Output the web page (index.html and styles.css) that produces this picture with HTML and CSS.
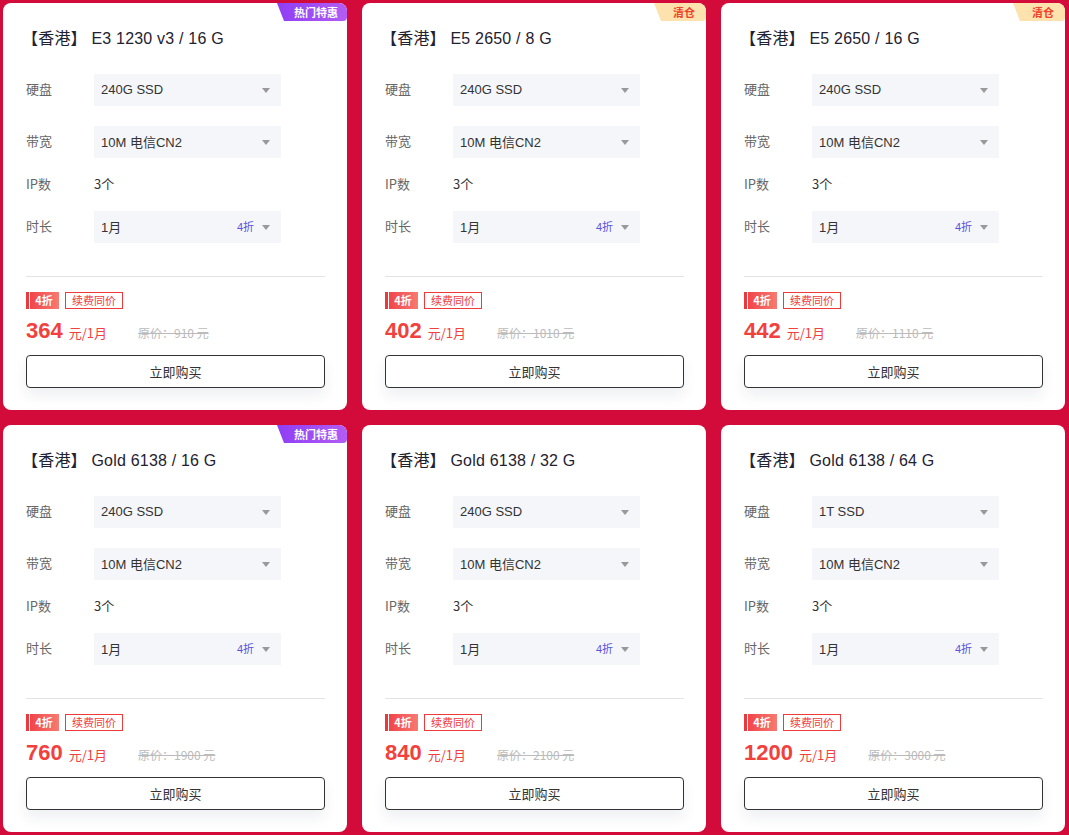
FILE: index.html
```html
<!DOCTYPE html>
<html lang="zh-CN">
<head>
<meta charset="utf-8">
<link rel="stylesheet" href="styles.css">
</head>
<body>
<div class="grid">

  <div class="card">
    <div class="badge badge-hot">热门特惠</div>
    <div class="title">【香港】 E3 1230 v3 / 16 G</div>
    <div class="form">
      <div class="row"><span class="label">硬盘</span><div class="select"><span>240G SSD</span><i class="arrow"></i></div></div>
      <div class="row"><span class="label">带宽</span><div class="select"><span>10M 电信CN2</span><i class="arrow"></i></div></div>
      <div class="row row-plain"><span class="label">IP数</span><span class="value">3个</span></div>
      <div class="row"><span class="label">时长</span><div class="select"><span>1月</span><span class="off">4折</span><i class="arrow"></i></div></div>
    </div>
    <div class="divider"></div>
    <div class="tags"><span class="tag-off">4折</span><span class="tag-renew">续费同价</span></div>
    <div class="price"><span class="num">364</span><span class="unit">元/1月</span><span class="orig">原价：910 元</span></div>
    <button class="buy">立即购买</button>
  </div>

  <div class="card">
    <div class="badge badge-clear">清仓</div>
    <div class="title">【香港】 E5 2650 / 8 G</div>
    <div class="form">
      <div class="row"><span class="label">硬盘</span><div class="select"><span>240G SSD</span><i class="arrow"></i></div></div>
      <div class="row"><span class="label">带宽</span><div class="select"><span>10M 电信CN2</span><i class="arrow"></i></div></div>
      <div class="row row-plain"><span class="label">IP数</span><span class="value">3个</span></div>
      <div class="row"><span class="label">时长</span><div class="select"><span>1月</span><span class="off">4折</span><i class="arrow"></i></div></div>
    </div>
    <div class="divider"></div>
    <div class="tags"><span class="tag-off">4折</span><span class="tag-renew">续费同价</span></div>
    <div class="price"><span class="num">402</span><span class="unit">元/1月</span><span class="orig">原价：1010 元</span></div>
    <button class="buy">立即购买</button>
  </div>

  <div class="card">
    <div class="badge badge-clear">清仓</div>
    <div class="title">【香港】 E5 2650 / 16 G</div>
    <div class="form">
      <div class="row"><span class="label">硬盘</span><div class="select"><span>240G SSD</span><i class="arrow"></i></div></div>
      <div class="row"><span class="label">带宽</span><div class="select"><span>10M 电信CN2</span><i class="arrow"></i></div></div>
      <div class="row row-plain"><span class="label">IP数</span><span class="value">3个</span></div>
      <div class="row"><span class="label">时长</span><div class="select"><span>1月</span><span class="off">4折</span><i class="arrow"></i></div></div>
    </div>
    <div class="divider"></div>
    <div class="tags"><span class="tag-off">4折</span><span class="tag-renew">续费同价</span></div>
    <div class="price"><span class="num">442</span><span class="unit">元/1月</span><span class="orig">原价：1110 元</span></div>
    <button class="buy">立即购买</button>
  </div>

  <div class="card">
    <div class="badge badge-hot">热门特惠</div>
    <div class="title">【香港】 Gold 6138 / 16 G</div>
    <div class="form">
      <div class="row"><span class="label">硬盘</span><div class="select"><span>240G SSD</span><i class="arrow"></i></div></div>
      <div class="row"><span class="label">带宽</span><div class="select"><span>10M 电信CN2</span><i class="arrow"></i></div></div>
      <div class="row row-plain"><span class="label">IP数</span><span class="value">3个</span></div>
      <div class="row"><span class="label">时长</span><div class="select"><span>1月</span><span class="off">4折</span><i class="arrow"></i></div></div>
    </div>
    <div class="divider"></div>
    <div class="tags"><span class="tag-off">4折</span><span class="tag-renew">续费同价</span></div>
    <div class="price"><span class="num">760</span><span class="unit">元/1月</span><span class="orig">原价：1900 元</span></div>
    <button class="buy">立即购买</button>
  </div>

  <div class="card">
    <div class="title">【香港】 Gold 6138 / 32 G</div>
    <div class="form">
      <div class="row"><span class="label">硬盘</span><div class="select"><span>240G SSD</span><i class="arrow"></i></div></div>
      <div class="row"><span class="label">带宽</span><div class="select"><span>10M 电信CN2</span><i class="arrow"></i></div></div>
      <div class="row row-plain"><span class="label">IP数</span><span class="value">3个</span></div>
      <div class="row"><span class="label">时长</span><div class="select"><span>1月</span><span class="off">4折</span><i class="arrow"></i></div></div>
    </div>
    <div class="divider"></div>
    <div class="tags"><span class="tag-off">4折</span><span class="tag-renew">续费同价</span></div>
    <div class="price"><span class="num">840</span><span class="unit">元/1月</span><span class="orig">原价：2100 元</span></div>
    <button class="buy">立即购买</button>
  </div>

  <div class="card">
    <div class="title">【香港】 Gold 6138 / 64 G</div>
    <div class="form">
      <div class="row"><span class="label">硬盘</span><div class="select"><span>1T SSD</span><i class="arrow"></i></div></div>
      <div class="row"><span class="label">带宽</span><div class="select"><span>10M 电信CN2</span><i class="arrow"></i></div></div>
      <div class="row row-plain"><span class="label">IP数</span><span class="value">3个</span></div>
      <div class="row"><span class="label">时长</span><div class="select"><span>1月</span><span class="off">4折</span><i class="arrow"></i></div></div>
    </div>
    <div class="divider"></div>
    <div class="tags"><span class="tag-off">4折</span><span class="tag-renew">续费同价</span></div>
    <div class="price"><span class="num">1200</span><span class="unit">元/1月</span><span class="orig">原价：3000 元</span></div>
    <button class="buy">立即购买</button>
  </div>

</div>
</body>
</html>
```
FILE: styles.css
```css
* { box-sizing: border-box; }
html, body { margin: 0; padding: 0; }
body {
  background: #d20b3b;
  font-family: "Liberation Sans", "Noto Sans CJK SC", sans-serif;
  color: #333;
  width: 1069px;
  height: 835px;
  overflow: hidden;
}
.grid {
  display: grid;
  grid-template-columns: repeat(3, 344px);
  column-gap: 15px;
  row-gap: 15px;
  padding: 3px 0 0 3px;
}
.card {
  position: relative;
  background: #fff;
  border-radius: 8px;
  padding: 23px 22px 23px 23px;
  height: 407px;
}
.badge {
  position: absolute;
  top: 0;
  right: 0;
  height: 18px;
  line-height: 18px;
  font-size: 11px;
  font-weight: bold;
  text-align: center;
  border-radius: 0 8px 4px 0;
  clip-path: polygon(0 0, 100% 0, 100% 100%, 7px 100%);
  padding-left: 8px;
  font-family: "Noto Sans CJK SC", sans-serif;
}
.badge-hot {
  width: 70px;
  color: #fff;
  background: linear-gradient(90deg, #8f3ef4, #b35cf4);
}
.badge-clear {
  width: 52px;
  color: #f0442a;
  background: #fde2ae;
}
.title {
  font-size: 16px;
  line-height: 26px;
  color: #1f2230;
  margin-left: -4px;
  letter-spacing: 0.2px;
  font-family: "Liberation Sans", "Noto Sans CJK SC", sans-serif;
}
.form {
  margin-top: 22px;
  display: flex;
  flex-direction: column;
}
.row {
  display: grid;
  grid-template-columns: 68px 187px;
  align-items: center;
  height: 32px;
  margin-bottom: 20px;
}
.row-plain {
  height: 22px;
  margin-top: -4px;
  margin-bottom: 15px;
}
.row:last-child { margin-bottom: 0; }
.label {
  font-size: 13px;
  line-height: 16px;
  padding-bottom: 2px;
  color: #666;
  font-family: "Noto Sans CJK SC", sans-serif;
}
.value {
  font-size: 13px;
  line-height: 16px;
  padding-bottom: 2px;
  color: #333;
  font-family: "Noto Sans CJK SC", sans-serif;
}
.select {
  height: 32px;
  background: #f5f6fa;
  display: flex;
  align-items: center;
  padding: 0 11px 2px 7px;
  font-size: 13px;
  color: #333;
}
.select span:first-child { flex: 1; }
.off {
  font-size: 11px;
  color: #5a55dc;
  margin-right: 8px;
}
.arrow {
  width: 0;
  height: 0;
  border-left: 4.5px solid transparent;
  border-right: 4.5px solid transparent;
  border-top: 5px solid #999;
  margin-top: 2px;
}
.divider {
  height: 1px;
  background: #e4e4e4;
  margin-top: 33px;
  width: 299px;
}
.tags {
  display: flex;
  gap: 6px;
  margin-top: 15px;
  height: 17px;
  font-family: "Noto Sans CJK SC", sans-serif;
}
.tag-off {
  width: 33px;
  height: 17px;
  line-height: 17px;
  font-size: 11px;
  font-weight: bold;
  color: #fff;
  text-align: center;
  padding-left: 3px;
  background: linear-gradient(90deg, #e8393d 0, #e8393d 3px, #fff 3px, #fff 4px, #f0454a 4px, #f77a70 100%);
}
.tag-renew {
  height: 17px;
  line-height: 15px;
  font-size: 11px;
  color: #f03a3a;
  border: 1px solid #f03a3a;
  padding: 0 6px;
}
.price {
  display: flex;
  align-items: baseline;
  height: 28px;
  margin-top: 9px;
  color: #f2403c;
}
.num {
  font-size: 22px;
  font-weight: bold;
}
.unit {
  font-size: 13px;
  margin-left: 6px;
  font-family: "Noto Sans CJK SC", sans-serif;
}
.orig {
  font-size: 12px;
  color: #bbb;
  text-decoration: line-through;
  margin-left: 31px;
  font-family: "Noto Sans CJK SC", sans-serif;
}
.buy {
  display: block;
  width: 299px;
  height: 33px;
  margin-top: 9px;
  border: 1px solid #333;
  border-radius: 4px;
  background: #fff;
  font-size: 13px;
  color: #333;
  font-family: "Noto Sans CJK SC", sans-serif;
  box-shadow: 0 8px 14px rgba(30, 40, 90, 0.07);
  cursor: pointer;
}
```
